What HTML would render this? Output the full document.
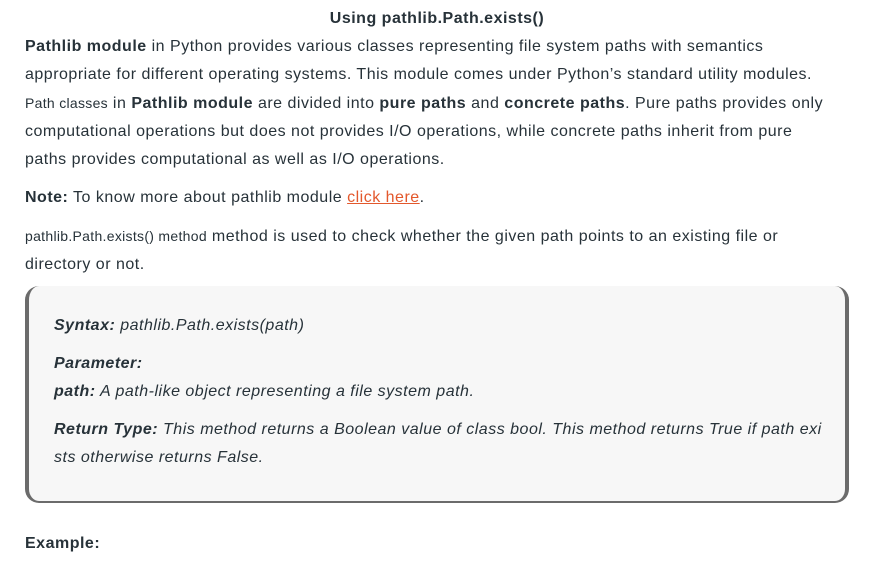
<!DOCTYPE html>
<html><head><style>
body{margin:0;background:#fff;color:#273239;font-family:"Liberation Sans",sans-serif;font-size:16px;letter-spacing:0.5px;}
.w{position:absolute;left:25px;width:860px;}
p{margin:0;line-height:28px;white-space:nowrap;}
b{font-weight:bold;}
.s{font-size:14px;letter-spacing:0.3px;}
.box{position:absolute;left:25px;top:286px;width:816px;height:215px;background:#f7f7f7;border-left:4px solid #6b6b6b;border-right:4px solid #6b6b6b;border-bottom:2px solid #6b6b6b;border-radius:14px;box-sizing:content-box;}
.box p{font-style:italic;position:absolute;left:25px;}
a{color:#e3582c;text-decoration:underline;}
</style></head><body>
<div style="position:absolute;top:7px;left:0;width:874px;text-align:center;font-weight:bold;font-size:16px;line-height:24px;">Using pathlib.Path.exists()</div>
<div class="w" style="top:33px">
<p><b>Pathlib module</b> in Python provides various classes representing file system paths with semantics</p>
<p>appropriate for different operating systems. This module comes under Python’s standard utility modules.</p>
<p><span class="s">Path classes</span> in <b>Pathlib module</b> are divided into <b>pure paths</b> and <b>concrete paths</b>. Pure paths provides only</p>
<p>computational operations but does not provides I/O operations, while concrete paths inherit from pure</p>
<p>paths provides computational as well as I/O operations.</p>
</div>
<div class="w" style="top:184px"><p><b>Note:</b> To know more about pathlib module <a>click here</a>.</p></div>
<div class="w" style="top:222px">
<p><span class="s">pathlib.Path.exists() method</span> method is used to check whether the given path points to an existing file or</p>
<p>directory or not.</p>
</div>
<div class="box">
<p style="top:26px"><b>Syntax:</b> pathlib.Path.exists(path)</p>
<p style="top:64px"><b>Parameter:</b></p>
<p style="top:92px"><b>path:</b> A path-like object representing a file system path.</p>
<p style="top:130px"><b>Return Type:</b> This method returns a Boolean value of class bool. This method returns True if path exi</p>
<p style="top:158px">sts otherwise returns False.</p>
</div>
<div class="w" style="top:530px"><p><b>Example:</b></p></div>
</body></html>
